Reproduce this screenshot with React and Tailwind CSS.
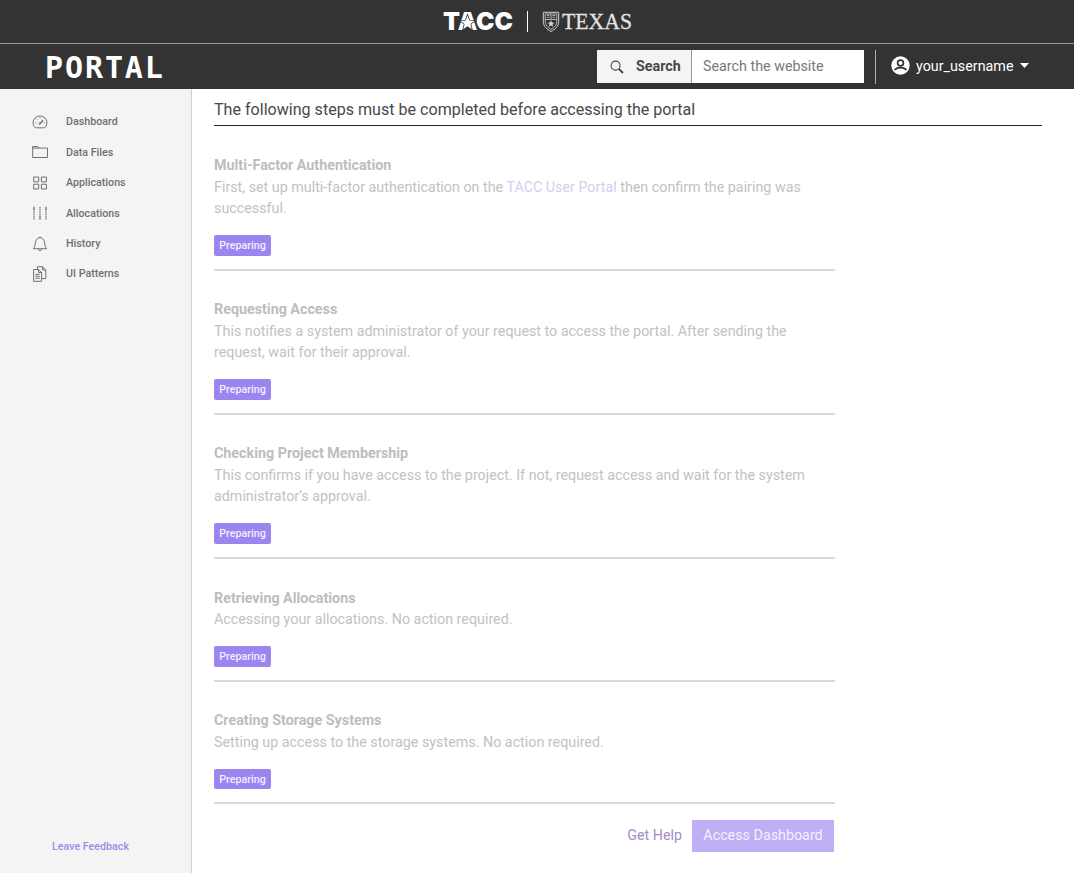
import React from 'react';

const NAV = [
  ['Dashboard', <><path d="M4.500 14.800Q2 13 2 9.800A7 6.800 0 0 1 16 9.800Q16 13 13.500 14.800Z" /><path d="M9.200 10.200 12 7.300" strokeWidth="1.500" /><path d="M9 4.800v1M4.400 9.800h1M12.600 9.800h1M5.800 6.500l.6.6" /><circle cx="8.700" cy="10.600" r=".8" /></>],
  ['Data Files', <path d="M1.700 14.500V3.500h5l1.200 1.600h8.600v9.400ZM1.700 5.100h6.200" />],
  ['Applications', <path d="M2.700 3h5v4.800h-5zM10.400 3h5v4.800h-5zM2.700 10.200h5V15h-5zM10.400 10.200h5V15h-5z" />],
  ['Allocations', <><path strokeWidth="1.200" strokeDasharray="1.600 .6" d="M3 2.800v12.600M9 2.800v12.600M15 2.800v12.600" /><path strokeWidth="1.600" d="M2 4.500h2M8 13.500h2M14 5h2" opacity=".6" /></>],
  ['History', <path d="M2 13.700c2.200-1.400 2-3.700 2.300-5.800C4.700 5 6.400 2.500 9 2.500s4.300 2.500 4.700 5.400c.3 2.100.1 4.400 2.300 5.800ZM7.300 14.200c.4 1.900 3 1.900 3.400 0M9 2.500V1.500" />],
  ['UI Patterns', <><path d="M2.600 4.500h5l3 3v8.800h-8zM7.600 4.500v3h3M4.300 9.300h4.500M4.300 11.300h4.500M4.300 13.300h4.500" /><path d="M6.500 4.300V1.700h5l3.300 3.300v8.600h-4M11.500 1.700v3.300h3.300" /></>],
];

const STEPS = [
  ['Multi-Factor Authentication', <>First, set up multi-factor authentication on the <a className="text-[#d6cdf1]">TACC User Portal</a> then confirm the pairing was<br />successful.</>],
  ['Requesting Access', <>This notifies a system administrator of your request to access the portal. After sending the<br />request, wait for their approval.</>],
  ['Checking Project Membership', <>This confirms if you have access to the project. If not, request access and wait for the system<br />administrator’s approval.</>],
  ['Retrieving Allocations', 'Accessing your allocations. No action required.'],
  ['Creating Storage Systems', 'Setting up access to the storage systems. No action required.'],
];

function Branding() {
  return (
    <div className="flex h-11 items-start border-b border-[#9b9b9b] pl-[443px]">
      <svg className="mt-[6px] h-8 w-[71px] overflow-visible" viewBox="0 0 71 32">
        <text x="0" y="24" fill="#fff" fontSize="25" fontWeight="900" fontFamily="Inter, sans-serif" textLength="70" lengthAdjust="spacingAndGlyphs">TACC</text>
        <path d="m24.500 9.500 1.800 5 5.200.2-4.100 3.300 1.400 5.300-4.300-3-4.300 3 1.400-5.300-4.100-3.300 5.200-.2Z" fill="#fff" stroke="#333" strokeWidth="1.600" paintOrder="stroke" />
      </svg>
      <div className="ml-[13px] mt-[11px] h-[21px] w-px bg-white" />
      <svg className="ml-[14px] mt-[11px] h-[22px] w-[18px]" viewBox="0 0 18 22" fill="none" stroke="#d2d2d2">
        <path d="M1.300 1.300h15.400v9.200c0 5-3.600 7.800-7.700 10-4.100-2.200-7.700-5-7.700-10Z" />
        <path d="M3.200 3h11.600v7.500c0 3.800-2.700 6.100-5.800 7.900-3.100-1.800-5.800-4.100-5.800-7.900ZM3.200 8.500h11.600M9 3v5M5 4.500h2.500M10.500 4.500H13M5 6.300h2.500M10.500 6.300H13" strokeWidth=".8" />
        <path d="m9 9.300 1 2.200 2.400.2-1.800 1.600.6 2.400L9 14.400l-2.200 1.300.6-2.400-1.800-1.600 2.400-.2Z" fill="#d2d2d2" stroke="none" />
      </svg>
      <svg className="ml-[2px] mt-[6px] h-8 w-[71px] overflow-visible" viewBox="0 0 71 32">
        <text x="0" y="22.500" fill="#e4e4e4" stroke="#e4e4e4" strokeWidth=".3" fontSize="24" fontFamily="Liberation Serif, serif" textLength="70" lengthAdjust="spacingAndGlyphs">TEXAS</text>
      </svg>
    </div>
  );
}

function Header() {
  return (
    <div className="flex h-[44.500px] items-start">
      <div className="w-[597px] pl-[45px] pt-[8px] font-['DejaVu_Sans_Mono'] text-[30px] leading-[31px] font-bold tracking-[1.900px] text-white">PORTAL</div>
      <div className="mt-[6px] flex h-[33px] w-[267px] bg-white">
        <div className="flex w-[95px] items-center border-r border-[#9a9a9a] bg-[#f4f4f4] pl-[13px]">
          <svg className="h-[14px] w-[14px]" viewBox="0 0 14 14" fill="none" stroke="#444">
            <circle cx="5.600" cy="5.600" r="4.500" strokeWidth="1.100" />
            <path d="m9 9 4 4" strokeWidth="1.800" />
          </svg>
          <span className="ml-[12px] pb-[2px] text-[14.300px] leading-5 font-bold text-[#484848]">Search</span>
        </div>
        <span className="pl-[11px] pt-[6px] text-[14.300px] leading-5 text-[#757b82]">Search the website</span>
      </div>
      <div className="ml-[11px] mt-[6px] h-[34px] w-px bg-[#afafaf]" />
      <svg className="ml-[15px] mt-[12px] h-[19px] w-[19px]" viewBox="0 0 19 19">
        <circle cx="9.500" cy="9.500" r="9.200" fill="#fff" />
        <circle cx="9.500" cy="7" r="2.900" fill="#fff" stroke="#333" strokeWidth="1.700" />
        <path d="M3.500 13.800c3-3 9-3 12 0" fill="none" stroke="#333" strokeWidth="1.700" />
      </svg>
      <span className="ml-[6px] mt-[12px] text-[14.300px] leading-5 text-white">your_username</span>
      <svg className="ml-[7px] mt-[19px] h-[5px] w-[9px]" viewBox="0 0 9 5"><path d="M0 0h9L4.500 5Z" fill="#fff" /></svg>
    </div>
  );
}

function Sidebar() {
  return (
    <nav className="flex w-[192px] shrink-0 flex-col border-r border-[#d0d0d0] bg-[#f4f4f4] pt-[18.300px]">
      {NAV.map(([label, icon]) => (
        <div key={label} className="flex h-[30.400px] items-center pl-[31px]">
          <svg className="h-[18px] w-[18px]" viewBox="0 0 18 18" fill="none" stroke="#707070" strokeWidth="1">{icon}</svg>
          <span className="ml-[17px] pt-px text-[10.700px] font-medium text-[#6f6f6f]">{label}</span>
        </div>
      ))}
      <a className="mt-auto mb-[18px] pl-[52px] text-[10.700px] leading-4 font-medium text-[#a08be6]">Leave Feedback</a>
    </nav>
  );
}

function Step({ title, children }) {
  return (
    <section className="border-b-2 border-[#dadada] pt-[28.500px] pb-[13px] text-[14.310px] leading-[21.450px] text-[#c2c2c2]">
      <h3 className="font-bold text-[#bdbdbd]">{title}</h3>
      <p className="whitespace-nowrap">{children}</p>
      <div className="mt-[15.600px] flex h-[20.700px] w-[57px] items-center justify-center rounded-[2px] bg-[#9d85ef] pt-px text-[10.700px] font-medium text-[#f1edff]">Preparing</div>
    </section>
  );
}

export default function App() {
  return (
    <div className="flex h-[873px] w-[1074px] flex-col overflow-hidden bg-white font-[Roboto,sans-serif]">
      <header className="shrink-0 bg-[#333333]">
        <Branding />
        <Header />
      </header>
      <div className="flex min-h-0 flex-1">
        <Sidebar />
        <main className="flex-1 pl-[22px]">
          <h2 className="h-[37.500px] w-[828px] border-b border-[#222] pt-[9px] text-[16.090px] leading-6 text-[#484848]">The following steps must be completed before accessing the portal</h2>
          <div className="w-[621px] pt-[0.600px]">
            {STEPS.map(([title, body]) => <Step key={title} title={title}>{body}</Step>)}
            <div className="mt-[15.700px] flex h-[32px] items-center justify-end pr-px text-[14.300px]">
              <a className="mr-[10px] pb-px text-[#a48dc9]">Get Help</a>
              <button className="h-[32px] w-[142px] bg-[#bfaff5] text-[#f4efff]">Access Dashboard</button>
            </div>
          </div>
        </main>
      </div>
    </div>
  );
}
